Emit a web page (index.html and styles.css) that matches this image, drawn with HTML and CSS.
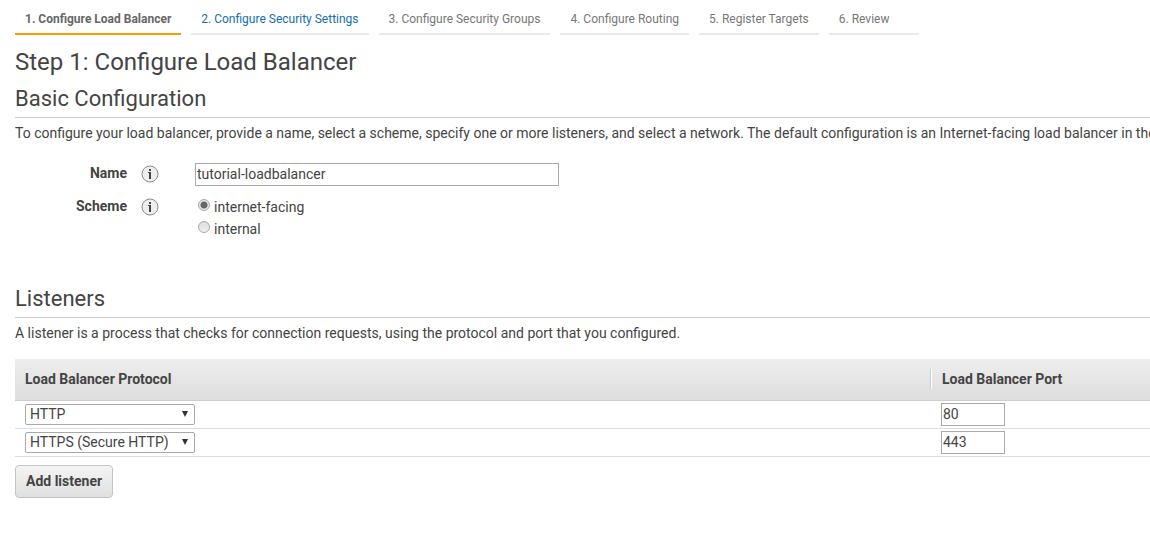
FILE: index.html
```html
<!DOCTYPE html>
<html lang="en">
<head>
<meta charset="utf-8">
<title>Configure Load Balancer</title>
<link rel="stylesheet" href="styles.css">
</head>
<body>
<nav class="steps" aria-label="Wizard steps">
  <a class="step step-current" href="#step1" aria-current="step">1. Configure Load Balancer</a>
  <a class="step step-next" href="#step2">2. Configure Security Settings</a>
  <span class="step">3. Configure Security Groups</span>
  <span class="step">4. Configure Routing</span>
  <span class="step">5. Register Targets</span>
  <span class="step">6. Review</span>
</nav>
<main class="content">
  <h1 class="page-title">Step 1: Configure Load Balancer</h1>

  <section class="basic">
    <h2 class="section-title">Basic Configuration</h2>
    <p class="description">To configure your load balancer, provide a name, select a scheme, specify one or more listeners, and select a network. The default configuration is an Internet-facing load balancer in the</p>
    <div class="form">
      <div class="field">
        <label class="field-label" for="lb-name">Name</label>
        <button class="info" type="button" aria-label="About name">
          <svg class="info-icon" viewBox="0 0 18 18"><circle cx="9" cy="9" r="8" fill="#eee" stroke="#8c8c8c"/><path d="M8 4h2v2H8zM7 7h3v7H8V8H7z" fill="#444"/></svg>
        </button>
        <input class="text-input name-input" id="lb-name" type="text" value="tutorial-loadbalancer">
      </div>
      <div class="field" role="radiogroup" aria-labelledby="scheme-label">
        <span class="field-label" id="scheme-label">Scheme</span>
        <button class="info" type="button" aria-label="About scheme">
          <svg class="info-icon" viewBox="0 0 18 18"><circle cx="9" cy="9" r="8" fill="#eee" stroke="#8c8c8c"/><path d="M8 4h2v2H8zM7 7h3v7H8V8H7z" fill="#444"/></svg>
        </button>
        <div class="options">
          <label class="option"><input class="radio" type="radio" name="scheme" checked>internet-facing</label>
          <label class="option"><input class="radio" type="radio" name="scheme">internal</label>
        </div>
      </div>
    </div>
  </section>

  <section class="listeners">
    <h2 class="section-title">Listeners</h2>
    <p class="description">A listener is a process that checks for connection requests, using the protocol and port that you configured.</p>
    <table class="listener-table">
      <thead>
        <tr><th class="protocol-col" scope="col"><div class="heading">Load Balancer Protocol</div></th><th scope="col"><div class="heading heading-port">Load Balancer Port</div></th></tr>
      </thead>
      <tbody>
        <tr>
          <td>
            <div class="select-box">
              <select class="select" aria-label="Load Balancer Protocol 1"><option>HTTP</option><option>HTTPS (Secure HTTP)</option></select>
              <svg class="arrow" viewBox="0 0 6 6"><path d="M0 0h6L3 6z" fill="#333"/></svg>
            </div>
          </td>
          <td class="port-cell"><input class="text-input port-input" type="text" value="80" aria-label="Load Balancer Port 1"></td>
        </tr>
        <tr>
          <td>
            <div class="select-box">
              <select class="select" aria-label="Load Balancer Protocol 2"><option>HTTP</option><option selected>HTTPS (Secure HTTP)</option></select>
              <svg class="arrow" viewBox="0 0 6 6"><path d="M0 0h6L3 6z" fill="#333"/></svg>
            </div>
          </td>
          <td class="port-cell"><input class="text-input port-input" type="text" value="443" aria-label="Load Balancer Port 2"></td>
        </tr>
      </tbody>
    </table>
    <button class="add-button" type="button">Add listener</button>
  </section>
</main>
</body>
</html>
```
FILE: styles.css
```css
* {
  box-sizing: border-box;
}

body {
  margin: 0;
  padding: 4px 0 0 15px;
  overflow-x: hidden;
  background: #fff;
  color: #444;
  font: 14px/20px Roboto, Arial, sans-serif;
}

.steps {
  display: flex;
  gap: 10px;
  font-size: 12px;
}

.step {
  min-width: 90px;
  padding: 5px 10px 4px;
  border-bottom: 2px solid #eaeaea;
  color: #777;
  text-decoration: none;
  white-space: nowrap;
}

.step-current {
  border-color: #f90;
  color: #666;
  font-weight: bold;
}

.step-next {
  color: #146eb4;
}

.page-title,
.section-title {
  margin: 0;
  font-weight: normal;
}

.page-title {
  padding-top: 12px;
  font-size: 24px;
  line-height: 30px;
}

.section-title {
  padding: 8px 0 4px;
  border-bottom: 1px solid #ccc;
  font-size: 22px;
  line-height: 28px;
}

.description {
  margin: 5px 0 0;
  white-space: nowrap;
}

.form {
  display: grid;
  gap: 10px;
  padding-top: 20px;
}

.field {
  display: grid;
  grid-template-columns: 112px 18px minmax(0, 1fr);
  column-gap: 14px;
  align-items: start;
}

.field-label {
  font-weight: bold;
  text-align: right;
}

.info {
  width: 18px;
  height: 18px;
  margin: 2px 0 0;
  padding: 0;
  border: 0;
  background: none;
}

.info-icon {
  display: block;
}

.text-input {
  display: block;
  height: 23px;
  padding: 0 1px 2px;
  border: 1px solid #a9a9a9;
  border-radius: 0;
  background: #fff;
  color: #444;
  font: inherit;
}

.name-input {
  width: 364px;
  margin-left: 22px;
}

.options {
  display: grid;
  gap: 2px;
  padding: 1px 0 0 25px;
}

.option {
  display: flex;
  gap: 4px;
}

.radio {
  appearance: none;
  width: 12px;
  height: 12px;
  margin: 2px 0 0;
  border: 1px solid #aaa;
  border-radius: 50%;
  background: linear-gradient(#ddd, #f0f0f0);
}

.radio:checked {
  background: radial-gradient(circle, #666 3px, #e8e8e8 4px);
}

.listeners {
  padding-top: 38px;
}

.listener-table {
  width: 100%;
  margin-top: 16px;
  border-collapse: separate;
  border-spacing: 0;
  table-layout: fixed;
}

.protocol-col {
  width: 915px;
}

th {
  height: 42px;
  padding: 0 0 2px;
  border-bottom: 1px solid #ccc;
  background: linear-gradient(#eee, #ddd);
  text-align: left;
}

.heading {
  padding-left: 10px;
}

.heading-port {
  padding-left: 11px;
  border-left: 1px solid #ccc;
  box-shadow: inset 1px 0 #fff;
}

td {
  height: 28px;
  padding: 0 10px;
  border-bottom: 1px solid #ddd;
}

.port-cell {
  padding-left: 11px;
}

.select-box {
  position: relative;
  width: 170px;
}

.select {
  appearance: none;
  display: block;
  width: 100%;
  height: 21px;
  padding: 0 4px;
  border: 1px solid #a9a9a9;
  border-radius: 2px;
  background: #fff;
  color: #444;
  font: inherit;
  line-height: 19px;
}

.arrow {
  position: absolute;
  top: 7px;
  right: 7px;
  width: 6px;
  height: 6px;
  pointer-events: none;
}

.port-input {
  width: 64px;
}

.add-button {
  height: 33px;
  margin-top: 8px;
  padding: 0 10px 2px;
  border: 1px solid #c4c4c4;
  border-radius: 4px;
  background: linear-gradient(#f4f4f4, #e0e0e0);
  color: #444;
  font: inherit;
  font-weight: bold;
}
```
